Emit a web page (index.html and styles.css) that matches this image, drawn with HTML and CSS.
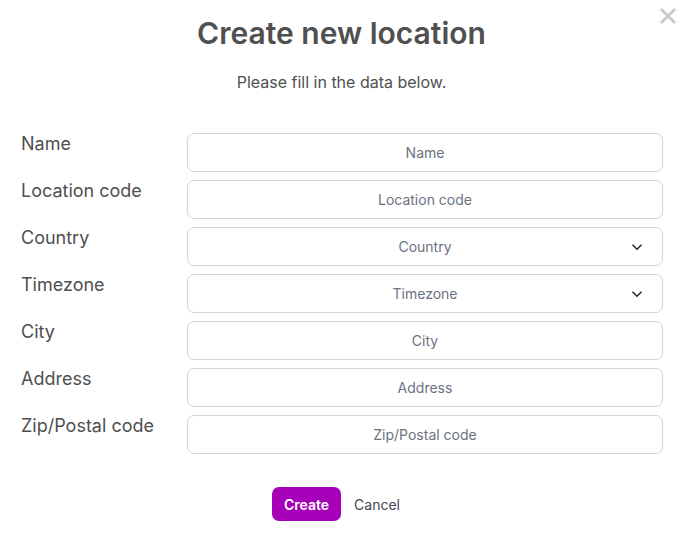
FILE: index.html
```html
<!DOCTYPE html>
<html>
<head>
<meta charset="utf-8">
<link rel="stylesheet" href="styles.css">
</head>
<body>
<div class="modal">
  <button class="close" aria-label="Close">
    <svg width="18" height="18" viewBox="0 0 18 18"><path d="M2 2L16 16M16 2L2 16" stroke="#c9c9c9" stroke-width="2.8" stroke-linecap="butt"/></svg>
  </button>
  <h1 class="title">Create new location</h1>
  <p class="subtitle">Please fill in the data below.</p>
  <form class="form">
    <label class="label">Name</label>
    <div class="field"><input class="input" placeholder="Name"></div>
    <label class="label">Location code</label>
    <div class="field"><input class="input" placeholder="Location code"></div>
    <label class="label">Country</label>
    <div class="field select"><span class="ph">Country</span>
      <svg class="chev" width="12" height="8" viewBox="0 0 12 8"><path d="M1.5 1.8L6 6.2L10.5 1.8" fill="none" stroke="#1f2937" stroke-width="1.6"/></svg></div>
    <label class="label">Timezone</label>
    <div class="field select"><span class="ph">Timezone</span>
      <svg class="chev" width="12" height="8" viewBox="0 0 12 8"><path d="M1.5 1.8L6 6.2L10.5 1.8" fill="none" stroke="#1f2937" stroke-width="1.6"/></svg></div>
    <label class="label">City</label>
    <div class="field"><input class="input" placeholder="City"></div>
    <label class="label">Address</label>
    <div class="field"><input class="input" placeholder="Address"></div>
    <label class="label">Zip/Postal code</label>
    <div class="field"><input class="input" placeholder="Zip/Postal code"></div>
  </form>
  <div class="actions">
    <button class="btn-primary">Create</button>
    <button class="btn-link">Cancel</button>
  </div>
</div>
</body>
</html>
```

FILE: styles.css
```css
* { box-sizing: border-box; }
html, body { margin: 0; background: #fff; }
body { font-family: Inter, "Noto Sans", sans-serif; }
.modal { position: relative; width: 683px; height: 537px; padding-top: 15px; }
.close { position: absolute; top: 7px; right: 6px; border: 0; background: none; padding: 0; width: 18px; height: 18px; cursor: pointer; }
.close svg { display: block; }
.title { margin: 0; text-align: center; font-size: 30px; line-height: 36px; font-weight: 600; color: #505050; letter-spacing: 0; }
.subtitle { margin: 21px 0 0; text-align: center; font-size: 16px; line-height: 20px; color: #505050; }
.form { display: grid; grid-template-columns: 166px 476px; row-gap: 8px; padding: 0 20px 0 21px; margin-top: 41px; }
.label { font-size: 18px; line-height: 20px; color: #4f4f4f; padding-top: 1px; }
.field { position: relative; height: 39px; border: 1px solid #d1d5db; border-radius: 7px; display: flex; align-items: center; justify-content: center; }
.input { width: 100%; height: 100%; border: 0; outline: none; background: transparent; text-align: center; font: 14px Inter, sans-serif; color: #374151; }
.input::placeholder { color: #6b7280; }
.ph { font-size: 14px; color: #6b7280; }
.chev { position: absolute; right: 19px; top: 15px; }
.actions { display: flex; justify-content: center; align-items: center; gap: 13px; margin-top: 33px; padding-right: 11px; }
.btn-primary { height: 34px; padding: 0 12px; border: 0; border-radius: 7px; background: #a600b8; color: #fff; font: 600 14px Inter, sans-serif; }
.btn-link { border: 0; background: none; padding: 0; font: 14px Inter, sans-serif; color: #3f4654; }
```
